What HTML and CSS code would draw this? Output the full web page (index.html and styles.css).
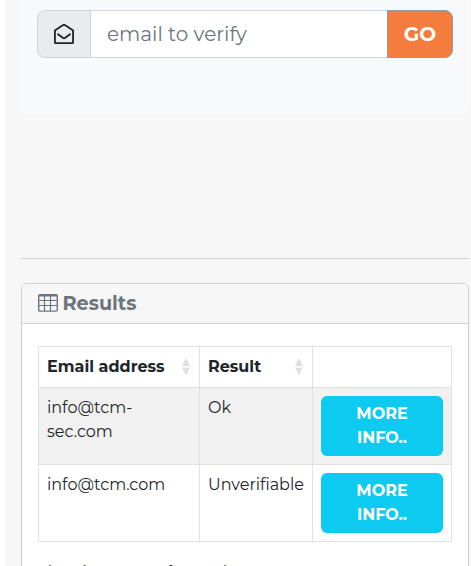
FILE: index.html
```html
<!DOCTYPE html>
<html lang="en">
<head>
<meta charset="utf-8">
<title>Email verifier</title>
<link rel="stylesheet" href="styles.css">
</head>
<body>
<main class="page">
  <form class="search">
    <div class="input-group">
      <span class="addon">
        <svg width="20" height="20" viewBox="0 0 20 20" fill="none" stroke="#212529" stroke-width="1.9" stroke-linejoin="round" stroke-linecap="round"><path d="M.9 7.1Q.9 6.4 1.5 6L8.8 1.3Q10 .6 11.2 1.3L18.5 6Q19.1 6.4 19.1 7.1V18.3Q19.1 19.1 18.3 19.1H1.7Q.9 19.1.9 18.3Z"/><path d="M4 10.3 8.8 13.8Q10 14.7 11.2 13.8L16 10.3"/></svg>
      </span>
      <input class="field" type="text" placeholder="email to verify" aria-label="email to verify">
      <button class="go" type="button">GO</button>
    </div>
  </form>
  <hr class="rule">
  <section class="card">
    <h2 class="card-header">
      <svg width="20" height="18" viewBox="0 0 20 18" fill="none" stroke="#6c757d"><rect x=".7" y=".7" width="18.6" height="16.4" rx="1.4" stroke-width="1.4"/><path d="M1 1.5H19" stroke-width="2"/><path d="M1 6.5H19M1 11.5H19M6.5 2V17M12.5 2V17" stroke-width="1.2"/></svg>
      <span>Results</span>
    </h2>
    <div class="card-body">
      <table class="results">
        <colgroup><col class="col-email"><col class="col-result"><col class="col-action"></colgroup>
        <thead><tr>
          <th><div class="th">Email address<svg width="8" height="18" viewBox="0 0 8 18" fill="#dfe1e1"><path d="M4 0 8 8H0ZM0 9.5H8L4 17.5Z"/></svg></div></th>
          <th><div class="th">Result<svg width="8" height="18" viewBox="0 0 8 18" fill="#dfe1e1"><path d="M4 0 8 8H0ZM0 9.5H8L4 17.5Z"/></svg></div></th>
          <th></th>
        </tr></thead>
        <tbody>
          <tr class="odd"><td>info@tcm-<br>sec.com</td><td>Ok</td><td><button class="more" type="button">MORE<br>INFO..</button></td></tr>
          <tr><td>info@tcm.com</td><td>Unverifiable</td><td><button class="more" type="button">MORE<br>INFO..</button></td></tr>
        </tbody>
      </table>
      <div class="table-info">Showing 1 to 2 of 2 entries</div>
    </div>
  </section>
</main>
</body>
</html>
```
FILE: styles.css
```css
*{box-sizing:border-box}
html,body{height:100%}
body{margin:0;background:#fff;color:#212529;font:400 16px/24px Montserrat,Inter,sans-serif;overflow:hidden}
.page{margin-left:5px;height:566px;padding:0 2px 0 16px;background:#f7f7f7;overflow:hidden}
.search{height:114px;padding:10px 16px 0;background:#f8f9fb;border-radius:0 0 4px 4px}
.input-group{display:flex;height:48px}
.addon{width:54px;display:flex;align-items:center;justify-content:center;background:#e9ecef;border:1px solid #ced4da;border-radius:8px 0 0 8px}
.field{flex:1;min-width:0;margin-left:-1px;border:1px solid #ced4da;background:#fff;padding:0 16px;font:400 20px/30px Montserrat,Inter,sans-serif;border-radius:0}
.field::placeholder{color:#6c757d;opacity:1}
.go{width:66px;margin-left:-1px;padding:0;background:#f47c3c;color:#fff;border:1px solid #999b9e;border-radius:0 8px 8px 0;font:700 20px/30px Montserrat,Inter,sans-serif}
.rule{height:1px;border:0;background:#d0d1d2;margin:144px 0 24px}
.card{height:320px;background:#fff;border:1px solid #cfd0d0;border-radius:6px 6px 0 0;overflow:hidden}
.card-header{display:flex;align-items:center;gap:4.5px;height:40px;margin:0;padding:0 16px 2px;background:#f7f7f7;border-bottom:1px solid #cfd0d0;color:#6c757d;font-size:19.2px;line-height:24px;font-weight:700}
.card-body{padding:22px 16px 0}
.results{width:414px;table-layout:fixed;border-collapse:collapse}
.col-email{width:161px}
.col-result{width:113px}
.col-action{width:139px}
.results th,.results td{border:1px solid #dee2e6;padding:8px;text-align:left;vertical-align:top}
.results th{font-weight:700}
.th{display:flex;align-items:center;justify-content:space-between;height:24px;white-space:nowrap;padding-right:1px}
.odd td{background:#f1f1f1}
.more{display:block;width:122px;height:60px;padding:6px 0;border:0;border-radius:6px;background:#0dcaf0;color:#fff;font:700 16px/24px Montserrat,Inter,sans-serif}
.table-info{padding-top:19px}
```
